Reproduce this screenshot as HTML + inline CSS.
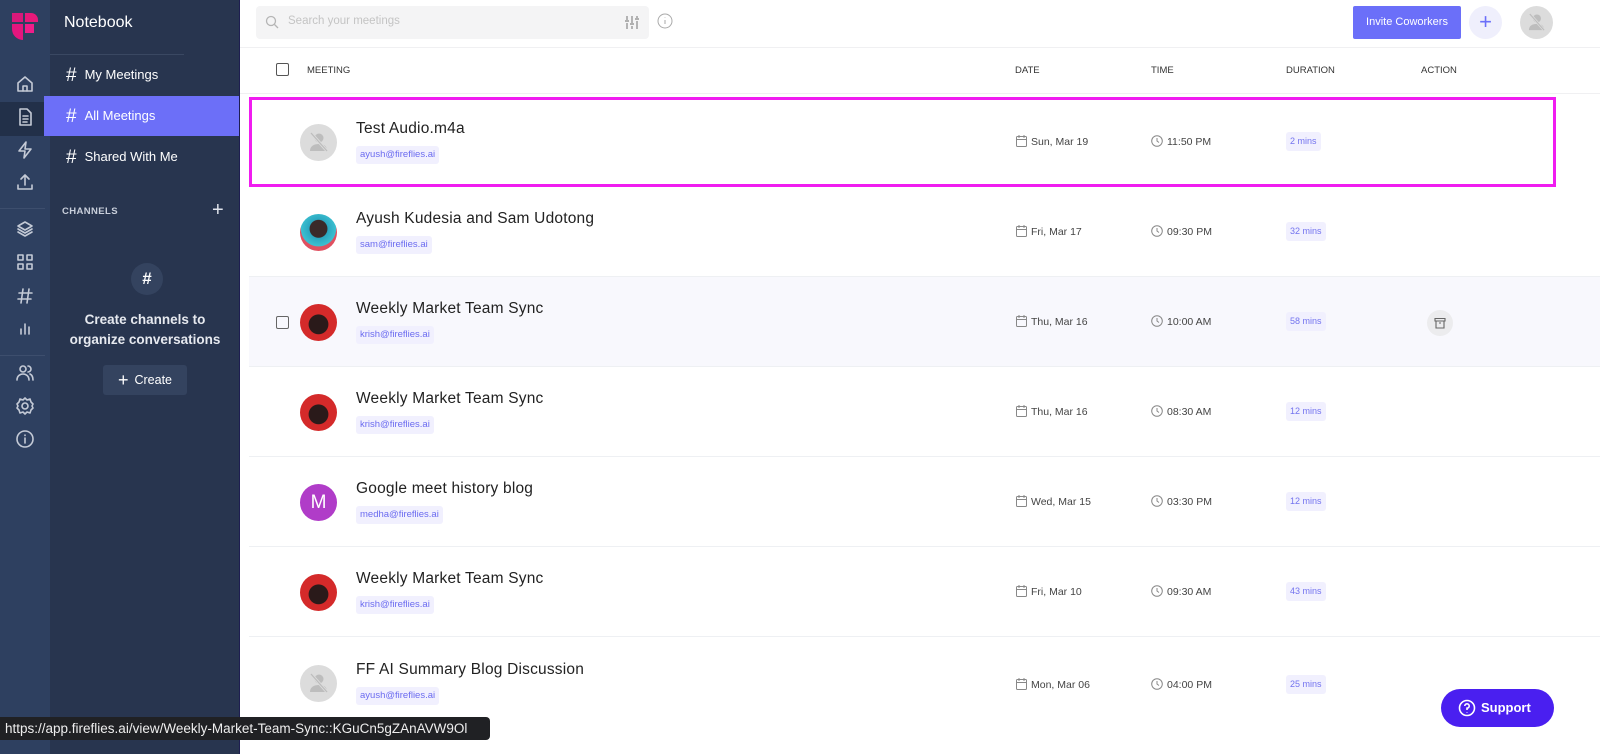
<!DOCTYPE html>
<html><head><meta charset="utf-8"><style>
*{box-sizing:border-box;margin:0;padding:0}
body{width:1600px;height:754px;overflow:hidden;background:#fff;font-family:"Liberation Sans",sans-serif;position:relative}
.rail{position:absolute;left:0;top:0;width:50px;height:754px;background:#2e4060}
.panel{position:absolute;left:50px;top:0;width:190px;height:754px;background:#28354f}
.ab{position:absolute}
.ri{position:absolute;left:15px;width:20px;height:20px}
.ri svg{width:20px;height:20px;fill:none;stroke:#c4cad6;stroke-width:1.6;stroke-linecap:round;stroke-linejoin:round}
.nav{position:absolute;left:0;width:190px;height:40px;color:#fff;font-size:13px;line-height:40px;padding-left:16px}
.nav b{font-size:19px;font-weight:normal;margin-right:8px;vertical-align:-2px}
.row{position:absolute;left:249px;width:1351px;height:90px;border-bottom:1px solid #eef0f3}
.av{position:absolute;left:51px;top:27px;width:37px;height:37px;border-radius:50%;background:#dcdcdc;overflow:hidden}
.tt{position:absolute;left:107px;top:23px;font-size:15.5px;color:#222;letter-spacing:.2px}
.em{position:absolute;left:107px;top:49px;height:18px;line-height:18px;padding:0 4px;font-size:9.5px;color:#6b6bf0;background:#f1f0fe;border-radius:3px}
.dt{position:absolute;left:767px;top:38px;font-size:10.5px;color:#444}
.tm{position:absolute;left:902px;top:38px;font-size:10.5px;color:#444}
.du{position:absolute;left:1037px;top:35px;height:19px;line-height:19px;padding:0 4px;font-size:9px;color:#7373ef;background:#f1f0fe;border-radius:3px}
.ic{display:inline-block;width:11px;height:12px;vertical-align:-2px;margin-right:4px}
.hd{position:absolute;top:65px;font-size:9.5px;color:#333}
</style></head><body>
<svg width="0" height="0" style="position:absolute"><defs>
<symbol id="cal" viewBox="0 0 11 12"><g fill="none" stroke="#888" stroke-width="1"><rect x="0.5" y="1.5" width="10" height="10" rx="1"/><path d="M0.5 4.5h10M3 0v3M8 0v3"/></g></symbol>
<symbol id="clk" viewBox="0 0 12 12"><g fill="none" stroke="#888" stroke-width="1"><circle cx="6" cy="6" r="5.3"/><path d="M6 3v3l2 1.5"/></g></symbol>
<symbol id="nop" viewBox="0 0 37 37"><circle cx="19" cy="14" r="4.5" fill="#bdbdbd"/><path d="M10 27c0-5 4-7 9-7s8 2 8 7z" fill="#bdbdbd"/><path d="M11 9l16 18" stroke="#dcdcdc" stroke-width="3"/><path d="M11 9l16 18" stroke="#bdbdbd" stroke-width="1.3"/></symbol>
</defs></svg>
<div class="rail">
 <svg class="ab" style="left:11px;top:12px" width="28" height="29" viewBox="0 0 28 29"><path d="M1 1h11v9H1z" fill="#d9197a"/><path d="M14 1h6a7 7 0 0 1 7 7v2H14z" fill="#e8197a"/><path d="M1 12h11v16a11 11 0 0 1-11-11z" fill="#e3167e"/><path d="M14 12h9v9h-9z" fill="#f01d8a"/></svg>
 <div class="ri" style="top:74px"><svg viewBox="0 0 20 20"><path d="M3 9l7-6 7 6v8H3z"/><path d="M8 17v-5h4v5"/></svg></div>
 <div class="ab" style="left:0;top:102px;width:50px;height:34px;background:#223049"></div>
 <div class="ri" style="top:107px"><svg viewBox="0 0 20 20"><path d="M5 2h7l4 4v12H5z"/><path d="M8 9h5M8 12h5M8 15h4"/></svg></div>
 <div class="ri" style="top:140px"><svg viewBox="0 0 20 20"><path d="M11 2L4 11h6l-1 7 7-9h-6z"/></svg></div>
 <div class="ri" style="top:172px"><svg viewBox="0 0 20 20"><path d="M3 13v4h14v-4M10 3v10M6 7l4-4 4 4"/></svg></div>
 <div class="ab" style="left:0;top:208px;width:45px;height:1px;background:#3d4e6d"></div>
 <div class="ri" style="top:219px"><svg viewBox="0 0 20 20"><path d="M10 3l7 4-7 4-7-4z"/><path d="M3 10l7 4 7-4M3 13l7 4 7-4"/></svg></div>
 <div class="ri" style="top:252px"><svg viewBox="0 0 20 20"><path d="M3 3h5v5H3zM12 3h5v5h-5zM3 12h5v5H3zM12 12h5v5h-5z"/></svg></div>
 <div class="ri" style="top:286px"><svg viewBox="0 0 20 20"><path d="M8 3L6 17M14 3l-2 14M4 7h13M3 13h13"/></svg></div>
 <div class="ri" style="top:318px"><svg viewBox="0 0 20 20"><path d="M6 16v-5M10 16V6M14 16v-7"/></svg></div>
 <div class="ab" style="left:0;top:355px;width:45px;height:1px;background:#3d4e6d"></div>
 <div class="ri" style="top:363px"><svg viewBox="0 0 20 20"><circle cx="8" cy="6" r="3"/><path d="M2 17c0-4 3-6 6-6s6 2 6 6M13 3a3 3 0 0 1 0 6M15 11c2 1 3 3 3 6"/></svg></div>
 <div class="ri" style="top:396px"><svg viewBox="0 0 20 20"><circle cx="10" cy="10" r="3"/><path d="M10 2l2 2 3-1 1 3 2 2-1 2 1 2-2 2-1 3-3-1-2 2-2-2-3 1-1-3-2-2 1-2-1-2 2-2 1-3 3 1z"/></svg></div>
 <div class="ri" style="top:429px"><svg viewBox="0 0 20 20"><circle cx="10" cy="10" r="8"/><path d="M10 9v5M10 6v.5"/></svg></div>
</div>
<div class="panel">
 <div class="ab" style="left:14px;top:14px;color:#fff;font-size:16px">Notebook</div>
 <div class="ab" style="left:0;top:54px;width:134px;height:1px;background:#3a4862"></div>
 <div class="nav" style="top:55px"><b>#</b>My Meetings</div>
 <div class="nav" style="top:96px;left:-6px;width:196px;padding-left:22px;background:#6c6ff8"><b>#</b>All Meetings</div>
 <div class="nav" style="top:137px"><b>#</b>Shared With Me</div>
 <div class="ab" style="left:12px;top:206px;color:#c9cfdb;font-size:9.5px;font-weight:bold;letter-spacing:.4px">CHANNELS</div>
 <div class="ab" style="left:162px;top:199px;color:#e0e4ec;font-size:20px">+</div>
 <div class="ab" style="left:81px;top:263px;width:32px;height:32px;border-radius:50%;background:#34435f;color:#fff;text-align:center;line-height:32px;font-size:17px;font-weight:bold">#</div>
 <div class="ab" style="left:0;top:310px;width:190px;text-align:center;color:#e6e9ef;font-size:13.5px;line-height:20px;font-weight:bold">Create channels to<br>organize conversations</div>
 <div class="ab" style="left:53px;top:365px;width:84px;height:30px;border-radius:3px;background:#34435f;color:#fff;font-size:12.5px;line-height:30px;text-align:center"><span style="font-size:18px;vertical-align:-2px;margin-right:6px">+</span>Create</div>
</div>
<div class="ab" style="left:239px;top:0;width:1px;height:754px;background:#1e1e50"></div>
<div class="ab" style="left:256px;top:6px;width:393px;height:33px;background:#f4f4f5;border-radius:4px"></div>
<svg class="ab" style="left:265px;top:15px" width="14" height="14" viewBox="0 0 14 14" fill="none" stroke="#b5b5b5" stroke-width="1.3"><circle cx="6" cy="6" r="4.5"/><path d="M9.5 9.5L13 13"/></svg>
<div class="ab" style="left:288px;top:15px;font-size:11.5px;color:#c4c4c4">Search your meetings</div>
<svg class="ab" style="left:624px;top:15px" width="16" height="15" viewBox="0 0 16 15" fill="none" stroke="#888" stroke-width="1.2"><path d="M3 1v4M3 8v6M8 1v7M8 11v3M13 1v2M13 6v8M1 6h4M6 9h4M11 4h4"/></svg>
<svg class="ab" style="left:657px;top:13px" width="16" height="16" viewBox="0 0 16 16" fill="none" stroke="#aaa" stroke-width="1"><circle cx="8" cy="8" r="7"/><path d="M8 7v4M8 4.5v.5"/></svg>
<div class="ab" style="left:1353px;top:6px;width:108px;height:33px;background:#6b6ff9;border-radius:2px;color:#fff;font-size:11px;line-height:33px;text-align:center">Invite Coworkers</div>
<div class="ab" style="left:1469px;top:6px;width:33px;height:33px;border-radius:50%;background:#efeffc;color:#6b6ff9;font-size:22px;line-height:31px;text-align:center">+</div>
<div class="ab" style="left:1520px;top:6px;width:33px;height:33px;border-radius:50%;background:#dcdcdc;overflow:hidden"><svg width="33" height="33"><use href="#nop" width="33" height="33"/></svg></div>
<div class="ab" style="left:240px;top:47px;width:1360px;height:1px;background:#f0f0f2"></div>
<div class="ab" style="left:276px;top:63px;width:13px;height:13px;border:1.3px solid #555;border-radius:2px"></div>
<div class="hd" style="left:307px">MEETING</div>
<div class="hd" style="left:1015px">DATE</div>
<div class="hd" style="left:1151px">TIME</div>
<div class="hd" style="left:1286px">DURATION</div>
<div class="hd" style="left:1421px">ACTION</div>
<div class="ab" style="left:240px;top:93px;width:1360px;height:1px;background:#f0f0f2"></div>

<div class="row" style="top:97px;width:1307px;height:90px;border:3px solid #f01cf0"><div style="position:absolute;left:-3px;top:-3px;width:1307px;height:90px">
 <div class="av"><svg width="37" height="37"><use href="#nop" width="37" height="37"/></svg></div><div class="tt">Test Audio.m4a</div><div class="em">ayush@fireflies.ai</div>
 <div class="dt"><svg class="ic"><use href="#cal"/></svg>Sun, Mar 19</div><div class="tm"><svg class="ic" style="width:12px"><use href="#clk"/></svg>11:50 PM</div><div class="du">2 mins</div></div></div>

<div class="row" style="top:187px"><div class="av" style="background:radial-gradient(circle at 50% 40%,#3a2a2a 30%,#2aa6c0 32%,#3cc0d0 60%,#e05060 62%)"></div><div class="tt">Ayush Kudesia and Sam Udotong</div><div class="em">sam@fireflies.ai</div>
 <div class="dt"><svg class="ic"><use href="#cal"/></svg>Fri, Mar 17</div><div class="tm"><svg class="ic" style="width:12px"><use href="#clk"/></svg>09:30 PM</div><div class="du">32 mins</div></div>

<div class="row" style="top:277px;background:#f8f8fd"><div class="ab" style="left:27px;top:39px;width:13px;height:13px;border:1.3px solid #666;border-radius:2px"></div><div class="av" style="background:radial-gradient(circle at 50% 55%,#2a1a1a 35%,#d42a2a 37%)"></div><div class="tt">Weekly Market Team Sync</div><div class="em">krish@fireflies.ai</div>
 <div class="dt"><svg class="ic"><use href="#cal"/></svg>Thu, Mar 16</div><div class="tm"><svg class="ic" style="width:12px"><use href="#clk"/></svg>10:00 AM</div><div class="du">58 mins</div>
 <div class="ab" style="left:1178px;top:33px;width:26px;height:26px;border-radius:50%;background:#ececee"></div>
 <svg class="ab" style="left:1185px;top:40px" width="12" height="12" viewBox="0 0 12 12" fill="none" stroke="#666" stroke-width="1.1"><path d="M1 1.5h10v2.5H1zM2 4v7h8V4M5 6h2"/></svg></div>

<div class="row" style="top:367px"><div class="av" style="background:radial-gradient(circle at 50% 55%,#2a1a1a 35%,#d42a2a 37%)"></div><div class="tt">Weekly Market Team Sync</div><div class="em">krish@fireflies.ai</div>
 <div class="dt"><svg class="ic"><use href="#cal"/></svg>Thu, Mar 16</div><div class="tm"><svg class="ic" style="width:12px"><use href="#clk"/></svg>08:30 AM</div><div class="du">12 mins</div></div>

<div class="row" style="top:457px"><div class="av" style="background:#b03cc8;color:#fff;font-size:19px;line-height:37px;text-align:center">M</div><div class="tt">Google meet history blog</div><div class="em">medha@fireflies.ai</div>
 <div class="dt"><svg class="ic"><use href="#cal"/></svg>Wed, Mar 15</div><div class="tm"><svg class="ic" style="width:12px"><use href="#clk"/></svg>03:30 PM</div><div class="du">12 mins</div></div>

<div class="row" style="top:547px"><div class="av" style="background:radial-gradient(circle at 50% 55%,#2a1a1a 35%,#d42a2a 37%)"></div><div class="tt">Weekly Market Team Sync</div><div class="em">krish@fireflies.ai</div>
 <div class="dt"><svg class="ic"><use href="#cal"/></svg>Fri, Mar 10</div><div class="tm"><svg class="ic" style="width:12px"><use href="#clk"/></svg>09:30 AM</div><div class="du">43 mins</div></div>

<div class="row" style="top:637px;border:none"><div class="av" style="top:28px"><svg width="37" height="37"><use href="#nop" width="37" height="37"/></svg></div><div class="tt" style="top:24px">FF AI Summary Blog Discussion</div><div class="em" style="top:50px">ayush@fireflies.ai</div>
 <div class="dt" style="top:41px"><svg class="ic"><use href="#cal"/></svg>Mon, Mar 06</div><div class="tm" style="top:41px"><svg class="ic" style="width:12px"><use href="#clk"/></svg>04:00 PM</div><div class="du" style="top:38px">25 mins</div></div>

<div class="ab" style="left:1441px;top:689px;width:113px;height:38px;border-radius:19px;background:#4a1ff0;color:#fff;font-size:13px;font-weight:bold;line-height:38px;padding-left:40px">Support</div>
<svg class="ab" style="left:1458px;top:699px" width="18" height="18" viewBox="0 0 18 18" fill="none" stroke="#fff" stroke-width="1.6"><circle cx="9" cy="9" r="7.5"/><path d="M6.8 7a2.2 2.2 0 1 1 2.2 2.2V11M9 13v.5"/></svg>
<div class="ab" style="left:0;top:717px;width:490px;height:23px;background:#202124;border-radius:0 4px 4px 0;color:#eee;font-size:13.5px;line-height:23px;padding-left:5px">https://app.fireflies.ai/view/Weekly-Market-Team-Sync::KGuCn5gZAnAVW9Ol</div>
</body></html>
